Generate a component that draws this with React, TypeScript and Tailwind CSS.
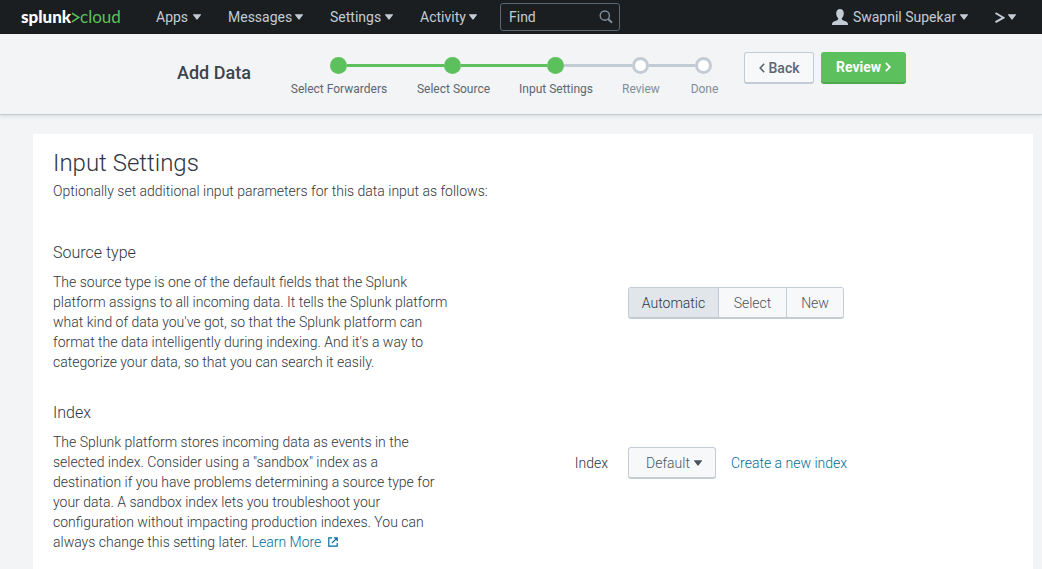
import React, { useState } from "react";

function Caret({ className = "" }: { className?: string }) {
  return (
    <svg viewBox="0 0 8 6" className={`h-[6px] w-[8px] shrink-0 ${className}`} fill="currentColor" aria-hidden="true">
      <path d="M.4.3h7.2c.4 0 .5.4.3.6L4.4 5.5c-.2.3-.6.3-.8 0L.1.9C-.1.7 0 .3.4.3z" />
    </svg>
  );
}

function NavMenu({ label, className }: { label: string; className: string }) {
  return (
    <button type="button" className={`flex items-center justify-between whitespace-nowrap ${className}`}>
      {label}
      <Caret />
    </button>
  );
}

const steps = [
  { label: "Select Forwarders", state: "done", width: "w-[126px]" },
  { label: "Select Source", state: "done", width: "w-[103px]" },
  { label: "Input Settings", state: "current", width: "w-[102px]" },
  { label: "Review", state: "todo", width: "w-[68px]" },
  { label: "Done", state: "todo", width: "w-[59px]" },
];

function lineColor(index: number) {
  if (index < 0 || index >= steps.length - 1) return "bg-transparent";
  return steps[index].state === "done" ? "bg-[#5cc05c]" : "bg-[#c3cbd4]";
}

function Steps() {
  return (
    <ol className="flex pt-[23px] text-[12px] leading-4">
      {steps.map((s, i) => (
        <li key={s.label} className={`flex flex-col gap-[7px] ${s.width}`}>
          <div className="flex items-center">
            <span className={`h-[3px] flex-1 ${lineColor(i - 1)}`} />
            <span
              className={`size-[17px] rounded-full ${
                s.state === "todo" ? "border-3 border-[#c3cbd4] bg-white" : "bg-[#5cc05c]"
              }`}
            />
            <span className={`h-[3px] flex-1 ${lineColor(i)}`} />
          </div>
          <span className={`pl-[2px] text-center whitespace-nowrap ${s.state === "todo" ? "text-[#818d99]" : "text-[#5c6773]"}`}>
            {s.label}
          </span>
        </li>
      ))}
    </ol>
  );
}

const sourceTypes = [
  { label: "Automatic", width: "w-[90px]" },
  { label: "Select", width: "w-[68px]" },
  { label: "New", width: "w-[56px]" },
];

export default function App() {
  const [sourceType, setSourceType] = useState("Automatic");
  return (
    <div className="flex min-h-screen flex-col bg-[#f2f4f5] font-['Roboto','Liberation_Sans',sans-serif] text-[14px] leading-5 text-[#3c444d]">
      <nav className="flex h-[34px] shrink-0 items-center bg-[#1a1e21] pr-[26px] pl-[21px] text-[#c3cbd4]">
        <a href="#" className="flex w-[135px] items-center font-['Lato',sans-serif] text-[17px] leading-5">
          <span className="font-black text-white">splunk</span>
          <svg viewBox="0 0 9 12" className="h-[12px] w-[9px]" fill="none" stroke="#5cc05c" strokeWidth="1.6" aria-hidden="true">
            <path d="M1 2.2 7.8 6.4 1 10.8" />
          </svg>
          <span className="text-[#5cc05c]">cloud</span>
        </a>
        <NavMenu label="Apps" className="mr-[27px] w-[45px]" />
        <NavMenu label="Messages" className="mr-[27px] w-[75px]" />
        <NavMenu label="Settings" className="mr-[27px] w-[63px]" />
        <NavMenu label="Activity" className="mr-[23px] w-[57px]" />
        <label className="flex h-[28px] w-[120px] items-center rounded-[3px] border border-[#5c6773] px-2">
          <input
            type="text"
            placeholder="Find"
            aria-label="Find"
            className="w-full min-w-0 flex-1 bg-transparent outline-none placeholder:text-[#c3cbd4]"
          />
          <svg viewBox="0 0 14 14" className="mr-[-2px] size-[14px] shrink-0" fill="none" stroke="#818d99" aria-hidden="true">
            <circle cx="5.8" cy="5.6" r="4.6" strokeWidth="1.4" />
            <path d="m9.2 9 3.8 3.8" strokeWidth="2" />
          </svg>
        </label>
        <button type="button" className="ml-auto flex items-center whitespace-nowrap">
          <svg viewBox="0 0 16 16" className="mr-[5px] size-[16px]" fill="currentColor" aria-hidden="true">
            <path d="M8 0C5.6 0 4.2 1.7 4.2 4.2c0 2 .7 3.8 1.9 4.9v1.4C5.8 11.5 1.2 12.2.3 14c-.3.6-.3 1.2-.3 2h16c0-.8 0-1.4-.3-2-.9-1.8-5.5-2.5-5.8-3.5V9.1c1.2-1.1 1.9-2.9 1.9-4.9C11.8 1.7 10.4 0 8 0z" />
          </svg>
          Swapnil Supekar
          <Caret className="ml-[4px]" />
        </button>
        <button type="button" aria-label="Apps shortcut" className="ml-[27px] flex items-center gap-[3px]">
          <svg viewBox="0 0 10 12" className="h-[12px] w-[10px]" fill="none" stroke="currentColor" strokeWidth="2" aria-hidden="true">
            <path d="M.5 2 8.5 6.7.5 11.2" />
          </svg>
          <Caret />
        </button>
      </nav>

      <header className="flex h-[81px] shrink-0 items-start border-b border-[#c3cbd4] pl-[177px] shadow-[0_1px_4px_rgba(0,0,0,0.12)]">
        <h2 className="w-[98px] pt-[27px] text-[18px] leading-6 font-medium whitespace-nowrap">Add Data</h2>
        <Steps />
        <div className="ml-[11px] flex gap-[7px] pt-[18px] font-medium">
          <button
            type="button"
            className="flex h-[32px] w-[70px] items-center justify-center gap-[4px] rounded-[3px] border border-b-2 border-[#c3cbd4] bg-[#f7f8fa] text-[#5c6773]"
          >
            <svg viewBox="0 0 6 10" className="h-[10px] w-[6px]" fill="none" stroke="currentColor" strokeWidth="1.6" aria-hidden="true">
              <path d="M5.2.8 1.2 5l4 4.2" />
            </svg>
            Back
          </button>
          <button
            type="button"
            className="flex h-[32px] w-[85px] items-center justify-center gap-[4px] rounded-[3px] border-b-2 border-[#4fa84f] bg-[#5cc05c] font-bold text-white"
          >
            Review
            <svg viewBox="0 0 6 10" className="h-[10px] w-[6px]" fill="none" stroke="currentColor" strokeWidth="1.8" aria-hidden="true">
              <path d="M.8.8 4.8 5l-4 4.2" />
            </svg>
          </button>
        </div>
      </header>

      <main className="mt-[19px] mr-[9px] ml-[33px] flex-1 bg-white px-5 pt-[13px] pb-[17px] font-light text-[#2f363e]">
        <h1 className="text-[24px] leading-8">Input Settings</h1>
        <p className="mt-[2px]">Optionally set additional input parameters for this data input as follows:</p>

        <section className="mt-10 flex">
          <div className="w-[575px] shrink-0">
            <h3 className="text-[16px] leading-6">Source type</h3>
            <p className="mt-[7px]">
              The source type is one of the default fields that the Splunk
              <br />
              platform assigns to all incoming data. It tells the Splunk platform
              <br />
              what kind of data you've got, so that the Splunk platform can
              <br />
              format the data intelligently during indexing. And it's a way to
              <br />
              categorize your data, so that you can search it easily.
            </p>
          </div>
          <div role="group" aria-label="Source type" className="mt-[46px] flex h-[32px] overflow-hidden rounded-[3px] border border-b-2 border-[#c3cbd4]">
            {sourceTypes.map((t) => (
              <button
                key={t.label}
                type="button"
                aria-pressed={t.label === sourceType}
                onClick={() => setSourceType(t.label)}
                className={`border-r border-[#c3cbd4] last:border-r-0 ${t.width} ${
                  t.label === sourceType ? "bg-[#e1e6eb] text-[#2f363e]" : "bg-[#f7f8fa] text-[#4a545f]"
                }`}
              >
                {t.label}
              </button>
            ))}
          </div>
        </section>

        <section className="mt-[29px] flex">
          <div className="w-[475px] shrink-0">
            <h3 className="text-[16px] leading-6">Index</h3>
            <p className="mt-[7px]">
              The Splunk platform stores incoming data as events in the
              <br />
              selected index. Consider using a "sandbox" index as a
              <br />
              destination if you have problems determining a source type for
              <br />
              your data. A sandbox index lets you troubleshoot your
              <br />
              configuration without impacting production indexes. You can
              <br />
              always change this setting later.{" "}
              <a href="#" className="text-[#006d9c]">
                Learn More
                <svg viewBox="0 0 10 10" className="ml-[7px] inline size-[10px] align-baseline" fill="none" stroke="currentColor" strokeWidth="1.2" aria-hidden="true">
                  <path d="M4 .8H.8v8.4h8.4V6M5.8.8h3.4v3.4M9.2.8 4 6" />
                </svg>
              </a>
            </p>
          </div>
          <div className="mt-[46px] flex h-[32px] items-center">
            <label htmlFor="index" className="w-[80px] text-right">
              Index
            </label>
            <div className="ml-5 grid h-[32px] w-[88px] items-center rounded-[3px] border border-b-2 border-[#c3cbd4] bg-[#f7f8fa] text-[#4a545f]">
              <select id="index" className="col-start-1 row-start-1 h-full w-full appearance-none bg-transparent pl-[17px] outline-none">
                <option>Default</option>
              </select>
              <Caret className="pointer-events-none col-start-1 row-start-1 mr-[13px] justify-self-end" />
            </div>
            <a href="#" className="ml-[15px] whitespace-nowrap text-[#006d9c]">
              Create a new index
            </a>
          </div>
        </section>
      </main>
    </div>
  );
}
